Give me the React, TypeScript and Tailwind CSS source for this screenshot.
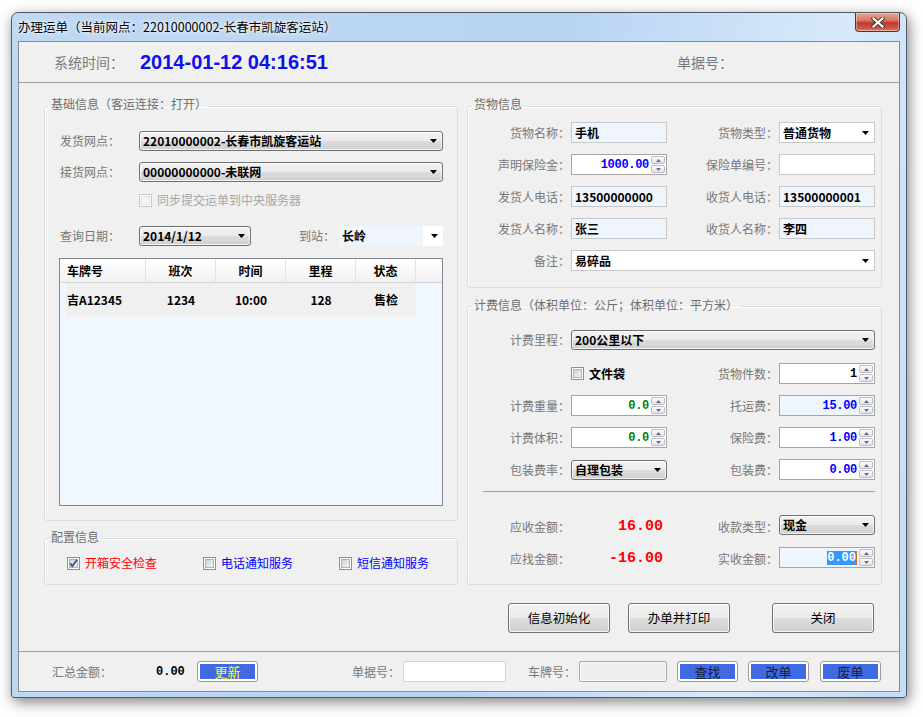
import React from "react";

const FONT = "font-['Noto_Sans_CJK_SC','Noto_Sans',sans-serif]";
const MONO = "font-['Liberation_Mono','Noto_Sans_CJK_SC',monospace]";
const GRAD = "bg-[linear-gradient(#f3f3f3_0%,#ebebeb_49%,#dddddd_50%,#cfcfcf_100%)]";

function Arrow() {
  return (
    <svg width="7" height="4" viewBox="0 0 7 4" className="shrink-0">
      <path d="M0 0H7L3.5 4Z" fill="#000" />
    </svg>
  );
}

function Label({ className = "", children }: { className?: string; children: React.ReactNode }) {
  return (
    <div className={`shrink-0 text-[12px] leading-[16px] text-[#777777] whitespace-nowrap ${className}`}>
      {children}
    </div>
  );
}

function BtnCombo({ className, text }: { className: string; text: string }) {
  return (
    <div
      className={`${className} h-[20px] shrink-0 flex items-center justify-between rounded-[3px] border border-[#707070] ${GRAD} pl-[3px] pr-[5px] shadow-[inset_0_0_0_1px_rgba(255,255,255,0.75)]`}
    >
      <span className="text-[12px] leading-[16px] font-bold text-black whitespace-nowrap">{text}</span>
      <Arrow />
    </div>
  );
}

function EditCombo({ className, text }: { className: string; text: string }) {
  return (
    <div className={`${className} h-[21px] shrink-0 flex items-center justify-between border border-[#c8c8c8] bg-white pl-[3px] pr-[5px]`}>
      <span className="text-[12px] leading-[16px] font-bold text-black whitespace-nowrap">{text}</span>
      <Arrow />
    </div>
  );
}

function TextBox({ className, text = "", bg = "bg-[#eef5fd]" }: { className: string; text?: string; bg?: string }) {
  return (
    <div className={`${className} h-[21px] shrink-0 flex items-center border border-[#c8c8c8] ${bg} pl-[3px]`}>
      <span className="text-[12px] leading-[16px] font-bold text-black whitespace-nowrap">{text}</span>
    </div>
  );
}

function SpinArrow({ up }: { up?: boolean }) {
  return (
    <div className="flex-1 rounded-[2px] border border-[#bdbdbd] bg-[linear-gradient(#fdfdfd,#e4e4e4)] flex items-center justify-center">
      <svg width="5" height="3" viewBox="0 0 5 3">
        <path d={up ? "M0 3H5L2.5 0Z" : "M0 0H5L2.5 3Z"} fill="#5a6f9e" />
      </svg>
    </div>
  );
}

function Spin({
  className,
  value,
  color = "text-[#0000ff]",
  bg = "bg-white",
  selected = false,
}: {
  className: string;
  value: string;
  color?: string;
  bg?: string;
  selected?: boolean;
}) {
  return (
    <div className={`${className} h-[21px] shrink-0 flex border border-[#a5a5a5] ${bg}`}>
      <div className="flex-1 flex items-center justify-end pr-[1px]">
        {selected ? (
          <span className="flex items-center">
            <span className={`${MONO} text-[12px] leading-[14px] font-bold bg-[#3399ff] text-white`}>{value}</span>
            <span className="w-[1px] h-[14px] bg-[#e0671b]" />
          </span>
        ) : (
          <span className={`${MONO} text-[12px] leading-[14px] font-bold tracking-[-0.3px] ${color}`}>{value}</span>
        )}
      </div>
      <div className="w-[16px] flex flex-col gap-[1px] p-[1px]">
        <SpinArrow up />
        <SpinArrow />
      </div>
    </div>
  );
}

function Check({ checked = false, disabled = false }: { checked?: boolean; disabled?: boolean }) {
  return (
    <svg width="13" height="13" viewBox="0 0 13 13" className="shrink-0">
      <defs>
        <linearGradient id="cbg" x1="0" y1="0" x2="1" y2="1">
          <stop offset="0" stopColor="#cbcfd5" />
          <stop offset="1" stopColor="#f7f7f7" />
        </linearGradient>
      </defs>
      <rect x="0.5" y="0.5" width="12" height="12" fill="#fff" stroke={disabled ? "#c8c8c8" : "#8e8f8f"} />
      <rect
        x="2.5"
        y="2.5"
        width="8"
        height="8"
        fill={disabled ? "#f4f4f4" : "url(#cbg)"}
        stroke={disabled ? "#e2e2e2" : "#b0b4ba"}
      />
      {checked && <path d="M3.2 6.2L5.3 9.2L10 2.8" fill="none" stroke="#3d5192" strokeWidth="1.8" />}
    </svg>
  );
}

function BlueBtn({ className, text, textColor }: { className: string; text: string; textColor: string }) {
  return (
    <div className={`${className} h-[21px] shrink-0 rounded-[3px] border border-[#9c9c9c] bg-white p-[2px]`}>
      <div className="w-full h-full bg-[#4169e1] flex items-center justify-center">
        <span className={`text-[13px] leading-[14px] ${textColor}`}>{text}</span>
      </div>
    </div>
  );
}

function BigBtn({ className, text }: { className: string; text: string }) {
  return (
    <div
      className={`${className} w-[102px] h-[30px] shrink-0 rounded-[3px] border border-[#707070] ${GRAD} shadow-[inset_0_0_0_1px_rgba(255,255,255,0.8)] flex items-center justify-center`}
    >
      <span className="text-[12.5px] leading-[16px] text-black">{text}</span>
    </div>
  );
}

function Legend({ children, pb }: { children: React.ReactNode; pb: string }) {
  return (
    <legend className={`ml-[4px] px-[2px] ${pb} text-[12px] leading-[16px] text-[#6e6e6e]`}>{children}</legend>
  );
}

const FS = "min-w-0 border border-[#d5dfe5] rounded-[3px] shadow-[inset_1px_1px_0_#ffffff]";

export default function App() {
  return (
    <div className={`${FONT} w-[923px] h-[717px] bg-white pt-[12px] pl-[11px] overflow-hidden`}>
      {/* window */}
      <div className="w-[896px] h-[686px] flex flex-col rounded-t-[7px] rounded-b-[3px] border border-[#4f5965] bg-[linear-gradient(100deg,#bfd8f4_0%,#b8d4f3_55%,#d8e9fb_82%,#c4dcf6_100%)] shadow-[2px_4px_14px_rgba(0,0,0,0.5)]">
        {/* title bar */}
        <div className="h-[28px] flex items-start justify-between">
          <div className="pl-[6px] h-[27px] flex items-center">
            <span className="text-[12.5px] leading-[16px] text-black [text-shadow:0_0_6px_#ffffff,0_0_3px_#ffffff] whitespace-nowrap">
              办理运单（当前网点：22010000002-长春市凯旋客运站）
            </span>
          </div>
          <div className="mr-[6px] w-[45px] h-[19px] rounded-b-[4px] border border-t-0 border-[#6b2b25] bg-[linear-gradient(#e7a596_0%,#d77a69_40%,#c0392b_55%,#cc5a4a_85%,#dd8576_100%)] shadow-[inset_0_0_0_1px_rgba(255,255,255,0.35)] flex items-center justify-center">
            <svg width="14" height="11" viewBox="0 0 14 11">
              <path d="M2.5 1.5L11.5 9.5M11.5 1.5L2.5 9.5" stroke="#3a3a3a" strokeWidth="4" strokeLinecap="square" />
              <path d="M2.5 1.5L11.5 9.5M11.5 1.5L2.5 9.5" stroke="#ffffff" strokeWidth="2.2" strokeLinecap="square" />
            </svg>
          </div>
        </div>

        {/* client */}
        <div className="ml-[6px] w-[882px] h-[651px] border border-[#7f8b97] bg-[#f0f0f0] flex flex-col">
          {/* header */}
          <div className="h-[41px] shrink-0 border-b border-[#a0a0a0] flex items-center pl-[35px]">
            <div className="w-[86px] text-[14px] leading-[18px] text-[#7a7a7a]">系统时间：</div>
            <div className="w-[537px] font-['Liberation_Sans',Arial,sans-serif] font-bold text-[20px] leading-[24px] text-[#1010ee]">
              2014-01-12 04:16:51
            </div>
            <div className="text-[14px] leading-[18px] text-[#7a7a7a]">单据号：</div>
          </div>

          {/* main */}
          <div className="h-[568px] shrink-0 flex pl-[25px] gap-[9px]">
            {/* left column */}
            <div className="w-[414px] flex flex-col pt-[13px]">
              <fieldset className={`h-[425px] ${FS}`}>
                <Legend pb="pb-[4px]">基础信息（客运连接：打开）</Legend>
                <div className="flex flex-col pl-[15px] pt-[15px]">
                  <div className="h-[20px] flex items-center">
                    <Label className="w-[79px]">发货网点：</Label>
                    <BtnCombo className="w-[304px]" text="22010000002-长春市凯旋客运站" />
                  </div>
                  <div className="mt-[11px] h-[20px] flex items-center">
                    <Label className="w-[79px]">接货网点：</Label>
                    <BtnCombo className="w-[304px]" text="00000000000-未联网" />
                  </div>
                  <div className="mt-[11px] h-[14px] flex items-center pl-[79px]">
                    <Check disabled />
                    <span className="ml-[5px] text-[12px] leading-[16px] text-[#a6a6a6]">同步提交运单到中央服务器</span>
                  </div>
                  <div className="mt-[19px] h-[20px] flex items-center">
                    <Label className="w-[79px]">查询日期：</Label>
                    <BtnCombo className="w-[112px]" text="2014/1/12" />
                    <Label className="ml-[48px] w-[40px]">到站：</Label>
                    <div className="w-[104px] h-[20px] flex">
                      <div className="w-[84px] h-full bg-[#eef5fd] flex items-center pl-[3px]">
                        <span className="text-[12px] leading-[16px] font-bold text-black">长岭</span>
                      </div>
                      <div className="flex-1 h-full bg-white flex items-center justify-end pr-[5px]">
                        <Arrow />
                      </div>
                    </div>
                  </div>
                  {/* grid */}
                  <div className="mt-[12px] -ml-[1px] w-[384px] h-[248px] border border-[#828790] bg-[#f0f7fe] flex flex-col">
                    <div className="h-[24px] shrink-0 flex bg-[linear-gradient(#ffffff,#f2f2f2)] border-b border-[#d5d5d5] text-[12px] leading-[16px] font-bold text-black">
                      <div className="w-[86px] border-r border-[#e3e3e3] flex items-center pl-[7px]">车牌号</div>
                      <div className="w-[70px] border-r border-[#e3e3e3] flex items-center justify-center">班次</div>
                      <div className="w-[70px] border-r border-[#e3e3e3] flex items-center justify-center">时间</div>
                      <div className="w-[70px] border-r border-[#e3e3e3] flex items-center justify-center">里程</div>
                      <div className="w-[60px] border-r border-[#e3e3e3] flex items-center justify-center">状态</div>
                      <div className="flex-1" />
                    </div>
                    <div className="ml-[6px] w-[350px] h-[34px] bg-[#f0f0f0] flex items-center text-[12px] leading-[16px] font-bold text-black">
                      <div className="w-[80px] pl-[1px]">吉A12345</div>
                      <div className="w-[70px] text-center">1234</div>
                      <div className="w-[70px] text-center">10:00</div>
                      <div className="w-[70px] text-center">128</div>
                      <div className="w-[60px] text-center">售检</div>
                    </div>
                  </div>
                </div>
              </fieldset>

              <fieldset className={`mt-[8px] h-[56px] ${FS}`}>
                <Legend pb="pb-[3px]">配置信息</Legend>
                <div className="mt-[8px] h-[14px] flex items-center pl-[22px] text-[12px] leading-[16px]">
                  <div className="w-[136px] flex items-center">
                    <Check checked />
                    <span className="ml-[5px] text-[#ff0000]">开箱安全检查</span>
                  </div>
                  <div className="w-[136px] flex items-center">
                    <Check />
                    <span className="ml-[5px] text-[#0000ff]">电话通知服务</span>
                  </div>
                  <div className="flex items-center">
                    <Check />
                    <span className="ml-[5px] text-[#0000ff]">短信通知服务</span>
                  </div>
                </div>
              </fieldset>
            </div>

            {/* right column */}
            <div className="w-[415px] flex flex-col pt-[13px]">
              <fieldset className={`h-[192px] ${FS}`}>
                <Legend pb="pb-[4px]">货物信息</Legend>
                <div className="flex flex-col pt-[6px] gap-[11px]">
                  <div className="h-[21px] flex items-center">
                    <Label className="w-[103px] text-right pr-[1px]">货物名称：</Label>
                    <TextBox className="w-[96px]" text="手机" />
                    <Label className="w-[112px] text-right pr-[1px]">货物类型：</Label>
                    <EditCombo className="w-[96px]" text="普通货物" />
                  </div>
                  <div className="h-[21px] flex items-center">
                    <Label className="w-[103px] text-right pr-[1px]">声明保险金：</Label>
                    <Spin className="w-[96px]" value="1000.00" />
                    <Label className="w-[112px] text-right pr-[1px]">保险单编号：</Label>
                    <TextBox className="w-[96px]" bg="bg-white" />
                  </div>
                  <div className="h-[21px] flex items-center">
                    <Label className="w-[103px] text-right pr-[1px]">发货人电话：</Label>
                    <TextBox className="w-[96px]" text="13500000000" />
                    <Label className="w-[112px] text-right pr-[1px]">收货人电话：</Label>
                    <TextBox className="w-[96px]" text="13500000001" />
                  </div>
                  <div className="h-[21px] flex items-center">
                    <Label className="w-[103px] text-right pr-[1px]">发货人名称：</Label>
                    <TextBox className="w-[96px]" text="张三" />
                    <Label className="w-[112px] text-right pr-[1px]">收货人名称：</Label>
                    <TextBox className="w-[96px]" text="李四" />
                  </div>
                  <div className="h-[21px] flex items-center">
                    <Label className="w-[103px] text-right pr-[1px]">备注：</Label>
                    <EditCombo className="w-[304px]" text="易碎品" />
                  </div>
                </div>
              </fieldset>

              <fieldset className={`mt-[9px] h-[288px] ${FS}`}>
                <Legend pb="pb-[2px]">计费信息（体积单位：公斤；体积单位：平方米）</Legend>
                <div className="flex flex-col pt-[15px]">
                  <div className="h-[20px] flex items-center">
                    <Label className="w-[103px] text-right pr-[1px]">计费里程：</Label>
                    <BtnCombo className="w-[304px]" text="200公里以下" />
                  </div>
                  <div className="mt-[13px] h-[21px] flex items-center">
                    <div className="w-[103px] shrink-0" />
                    <div className="w-[96px] shrink-0 flex items-center">
                      <Check />
                      <span className="ml-[5px] text-[12px] leading-[16px] font-bold text-black">文件袋</span>
                    </div>
                    <Label className="w-[112px] text-right pr-[1px]">货物件数：</Label>
                    <Spin className="w-[96px]" value="1" color="text-black" />
                  </div>
                  <div className="mt-[11px] h-[21px] flex items-center">
                    <Label className="w-[103px] text-right pr-[1px]">计费重量：</Label>
                    <Spin className="w-[96px]" value="0.0" color="text-[#008000]" />
                    <Label className="w-[112px] text-right pr-[1px]">托运费：</Label>
                    <Spin className="w-[96px]" value="15.00" bg="bg-[#eef5fd]" />
                  </div>
                  <div className="mt-[11px] h-[21px] flex items-center">
                    <Label className="w-[103px] text-right pr-[1px]">计费体积：</Label>
                    <Spin className="w-[96px]" value="0.0" color="text-[#008000]" />
                    <Label className="w-[112px] text-right pr-[1px]">保险费：</Label>
                    <Spin className="w-[96px]" value="1.00" />
                  </div>
                  <div className="mt-[11px] h-[21px] flex items-center">
                    <Label className="w-[103px] text-right pr-[1px]">包装费率：</Label>
                    <BtnCombo className="w-[96px]" text="自理包装" />
                    <Label className="w-[112px] text-right pr-[1px]">包装费：</Label>
                    <Spin className="w-[96px]" value="0.00" />
                  </div>
                  <div className="mt-[11px] ml-[15px] w-[392px] h-[1px] bg-[#a0a0a0]" />
                  <div className="mt-[23px] h-[20px] flex items-center">
                    <Label className="w-[103px] text-right pr-[1px] mt-[3px]">应收金额：</Label>
                    <div className={`w-[96px] shrink-0 mt-[3px] text-right pr-[4px] ${MONO} font-bold text-[15px] leading-[18px] text-[#ff0000]`}>16.00</div>
                    <Label className="w-[112px] text-right pr-[1px] mt-[3px]">收款类型：</Label>
                    <BtnCombo className="w-[96px]" text="现金" />
                  </div>
                  <div className="mt-[12px] h-[21px] flex items-center">
                    <Label className="w-[103px] text-right pr-[1px] mt-[3px]">应找金额：</Label>
                    <div className={`w-[96px] shrink-0 mt-[3px] text-right pr-[4px] ${MONO} font-bold text-[15px] leading-[18px] text-[#ff0000]`}>-16.00</div>
                    <Label className="w-[112px] text-right pr-[1px] mt-[3px]">实收金额：</Label>
                    <Spin className="w-[96px]" value="0.00" bg="bg-[#eef5fd]" selected />
                  </div>
                </div>
              </fieldset>

              <div className="mt-[18px] flex">
                <BigBtn className="ml-[41px]" text="信息初始化" />
                <BigBtn className="ml-[18px]" text="办单并打印" />
                <BigBtn className="ml-[42px]" text="关闭" />
              </div>
            </div>
          </div>

          {/* bottom bar */}
          <div className="flex-1 border-t border-[#a0a0a0] flex items-center pl-[33px]">
            <Label className="w-[104px]">汇总金额：</Label>
            <div className={`w-[41px] shrink-0 ${MONO} font-bold text-[12px] leading-[14px] text-black`}>0.00</div>
            <BlueBtn className="w-[61px]" text="更新" textColor="text-[#ffff00]" />
            <div className="w-[94px] shrink-0" />
            <Label className="w-[51px]">单据号：</Label>
            <div className="w-[103px] h-[21px] shrink-0 rounded-[2px] border border-[#d3d3d3] bg-white" />
            <div className="w-[22px] shrink-0" />
            <Label className="w-[51px]">车牌号：</Label>
            <div className="w-[88px] h-[21px] shrink-0 rounded-[2px] border border-[#ababab] bg-[#efefef] shadow-[inset_0_0_0_1px_#f8f8f8]" />
            <BlueBtn className="ml-[10px] w-[61px]" text="查找" textColor="text-[#14213d]" />
            <BlueBtn className="ml-[10px] w-[61px]" text="改单" textColor="text-[#14213d]" />
            <BlueBtn className="ml-[11px] w-[61px]" text="废单" textColor="text-[#14213d]" />
          </div>
        </div>
      </div>
    </div>
  );
}
